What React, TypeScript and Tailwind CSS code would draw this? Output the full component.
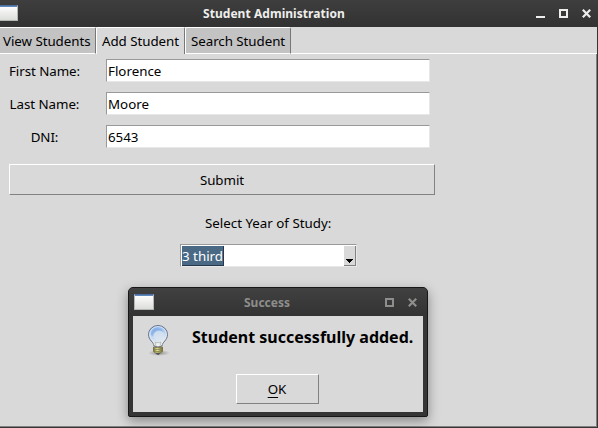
import React from "react";

function WindowIcon() {
  return (
    <div className="h-4 w-5 shrink-0 border border-[#b4b8b4] border-t-[#4b6f9f] bg-linear-to-b from-white to-[#dcdeda]">
      <div className="h-px bg-[#5f87bd]" />
    </div>
  );
}

function MaximizeIcon() {
  return (
    <svg width="9" height="9" viewBox="0 0 9 9" shapeRendering="crispEdges">
      <path d="M1 1h7v7h-7z" fill="none" stroke="currentColor" strokeWidth="2" />
    </svg>
  );
}

function CloseIcon() {
  return (
    <svg width="9" height="9" viewBox="0 0 9 9">
      <path d="M.8 .8l7.400 7.400M8.200 .8l-7.400 7.400" stroke="currentColor" strokeWidth="2.200" />
    </svg>
  );
}

function Bulb() {
  return (
    <svg width="24" height="32" viewBox="0 0 24 32" className="block">
      <defs>
        <linearGradient id="glass" x1="0" y1="0" x2="0.2" y2="1">
          <stop offset="0" stopColor="#75a6e5" />
          <stop offset=".45" stopColor="#b7d0ef" />
          <stop offset="1" stopColor="#f2f3ef" />
        </linearGradient>
        <radialGradient id="shade">
          <stop offset="0" stopColor="#555" stopOpacity=".55" />
          <stop offset="1" stopColor="#555" stopOpacity="0" />
        </radialGradient>
        <linearGradient id="cap">
          <stop offset="0" stopColor="#77753c" />
          <stop offset=".4" stopColor="#f0eda5" />
          <stop offset="1" stopColor="#77743b" />
        </linearGradient>
      </defs>
      <ellipse cx="13" cy="28" rx="11" ry="3" fill="url(#shade)" />
      <path d="M8 21c0-4-5.500-5.500-5.500-11.500a9.500 9 0 0 1 19 0c0 6-5.500 7.500-5.500 11.500q-4 2-8 0z" fill="url(#glass)" stroke="#6a7085" />
      <path d="M9 20c0-4-5.300-6-5.300-10.500a8.300 7.900 0 0 1 16.600 0c0 4.500-5.300 6.500-5.300 10.500" fill="none" stroke="#e3edfa" strokeWidth=".9" />
      <path d="M5 10c0-8 11-8 12-3-4-2-9-1-10 4z" fill="#6fa1e3" opacity=".5" />
      <ellipse cx="13" cy="10.500" rx="5.500" ry="5" fill="#dce6f0" opacity=".65" />
      <path d="M9 17l1 4M15 17l-1 4M9 17l2 1 1-1 1 1 2-1" fill="none" stroke="#a7a99c" strokeWidth=".6" />
      <path d="M7.500 22q4.500 1.500 9 0v4.500l-2 1.500h-5l-2-1.500z" fill="url(#cap)" stroke="#6e6b38" strokeWidth=".8" />
      <path d="M7.500 24q4 1.500 9-.5M8 26q4 1.500 8-.5" fill="none" stroke="#716e38" strokeWidth=".7" />
      <path d="M9.500 28h5l-1.500 1.700h-2z" fill="#555" />
    </svg>
  );
}

function Field({ label, value }: { label: string; value: string }) {
  return (
    <div className="flex h-[23px] items-center">
      <label className="w-[88px] pl-px text-center leading-[18px] tracking-[-0.05px]">{label}</label>
      <div className="ml-[18px] h-[23px] w-[324px] border border-t-[#999] border-r-[#e7e7e7] border-b-[#e7e7e7] border-l-[#999] bg-white pl-px leading-[23px]">
        {value}
      </div>
    </div>
  );
}

const raised = "border border-t-white border-l-white border-r-[#828282] border-b-[#828282] bg-[#d9d9d9]";

export default function App() {
  return (
    <div className="relative flex h-[428px] w-[598px] flex-col overflow-hidden bg-[#353535] font-['Noto_Sans',sans-serif] text-[13.333px] whitespace-nowrap text-black">
      <header className="flex h-[27px] shrink-0 items-center bg-linear-to-b from-[#3e3e3e] to-[#323232] text-[#eeeeec]">
        <div className="-ml-0.5 flex h-[27px] w-[205px] pt-[5px]">
          <WindowIcon />
        </div>
        <div className="flex-1 text-[12px] leading-[18px] font-bold tracking-[0.05px]">Student Administration</div>
        <div className="mr-[7px] flex items-center">
          <div className="mt-[7px] mr-[14px] h-0.5 w-[9px] bg-current" />
          <div className="mr-[14px]"><MaximizeIcon /></div>
          <CloseIcon />
        </div>
      </header>

      <nav className="mr-px flex h-[27px] shrink-0 bg-[#d9d9d9] leading-[26px] tracking-[-0.05px]">
        <div className="w-24 rounded-tr-[2px] border-t border-r border-b border-t-white border-r-[#777] border-b-white bg-[#c3c3c3] pl-[3px]">View Students</div>
        <div className="w-[89px] rounded-t-[2px] border-t border-r border-l border-t-white border-r-[#777] border-l-white pl-[5px]">Add Student</div>
        <div className="w-[106px] rounded-t-[2px] border-t border-r border-b border-l border-t-white border-r-[#777] border-b-white border-l-white bg-[#c3c3c3] pl-[5px]">Search Student</div>
        <div className="flex-1 border-b border-white" />
      </nav>

      <main className="mr-px mb-px flex flex-1 flex-col border-r border-b border-[#828282] bg-[#d9d9d9] pt-[5px]">
        <div className="flex flex-col gap-2.5">
          <Field label="First Name:" value="Florence" />
          <Field label="Last Name:" value="Moore" />
          <Field label="DNI:" value="6543" />
        </div>
        <button className={`${raised} mt-4 ml-[9px] h-[31px] w-[426px] pt-px leading-[29px] tracking-[-0.05px]`}>Submit</button>
        <div className="mt-[19px] ml-[180px] w-[177px] pl-[25px] leading-[18px]">Select Year of Study:</div>
        <div className="mt-[12px] ml-[180px] flex h-[23px] w-[177px] border border-t-[#999] border-r-[#e7e7e7] border-b-[#e7e7e7] border-l-[#999] bg-white pt-px pl-px">
          <div className="h-[20px] w-[42px] border-r border-b border-[#26384d] bg-[#4a6984] leading-[21px] text-white">3 third</div>
          <div className="flex-1" />
          <div className="flex h-[20px] w-3 items-end justify-center border-r border-b border-[#828282] bg-[#d9d9d9] pb-[2px]">
            <svg width="7" height="4" viewBox="0 0 7 4" shapeRendering="crispEdges">
              <path d="M0 0h7v1h-1v1h-1v1h-1v1h-1v-1h-1v-1h-1v-1h-1z" />
            </svg>
          </div>
        </div>
      </main>

      <section className="absolute top-[287px] left-[128px] flex h-[130px] w-[300px] flex-col rounded-t-[5px] rounded-b-[2px] border border-[#171717] bg-[#353535] px-1 pb-1 shadow-[0_4px_12px_rgba(0,0,0,0.38)]">
        <div className="-mx-1 flex h-7 shrink-0 items-center rounded-t-[4px] bg-linear-to-b from-[#414141] to-[#333] px-[5px] text-[#8e8e8c]">
          <div className="w-[110px]"><WindowIcon /></div>
          <div className="flex-1 pt-px text-[12px] leading-[18px] font-bold">Success</div>
          <div className="mr-[14px]"><MaximizeIcon /></div>
          <div className="mr-[5px]"><CloseIcon /></div>
        </div>
        <div className="flex flex-1 flex-col bg-[#d9d9d9]">
          <div className="flex h-[58px] pt-[9px] pl-[13px]">
            <Bulb />
            <div className="ml-[22px] text-[16px] leading-[24px] font-bold">Student successfully added.</div>
          </div>
          <button className={`${raised} ml-[103px] h-[30px] w-[83px] pr-px leading-[28px]`}>
            <span className="underline decoration-1 underline-offset-[3px]">O</span>K
          </button>
        </div>
      </section>
    </div>
  );
}
